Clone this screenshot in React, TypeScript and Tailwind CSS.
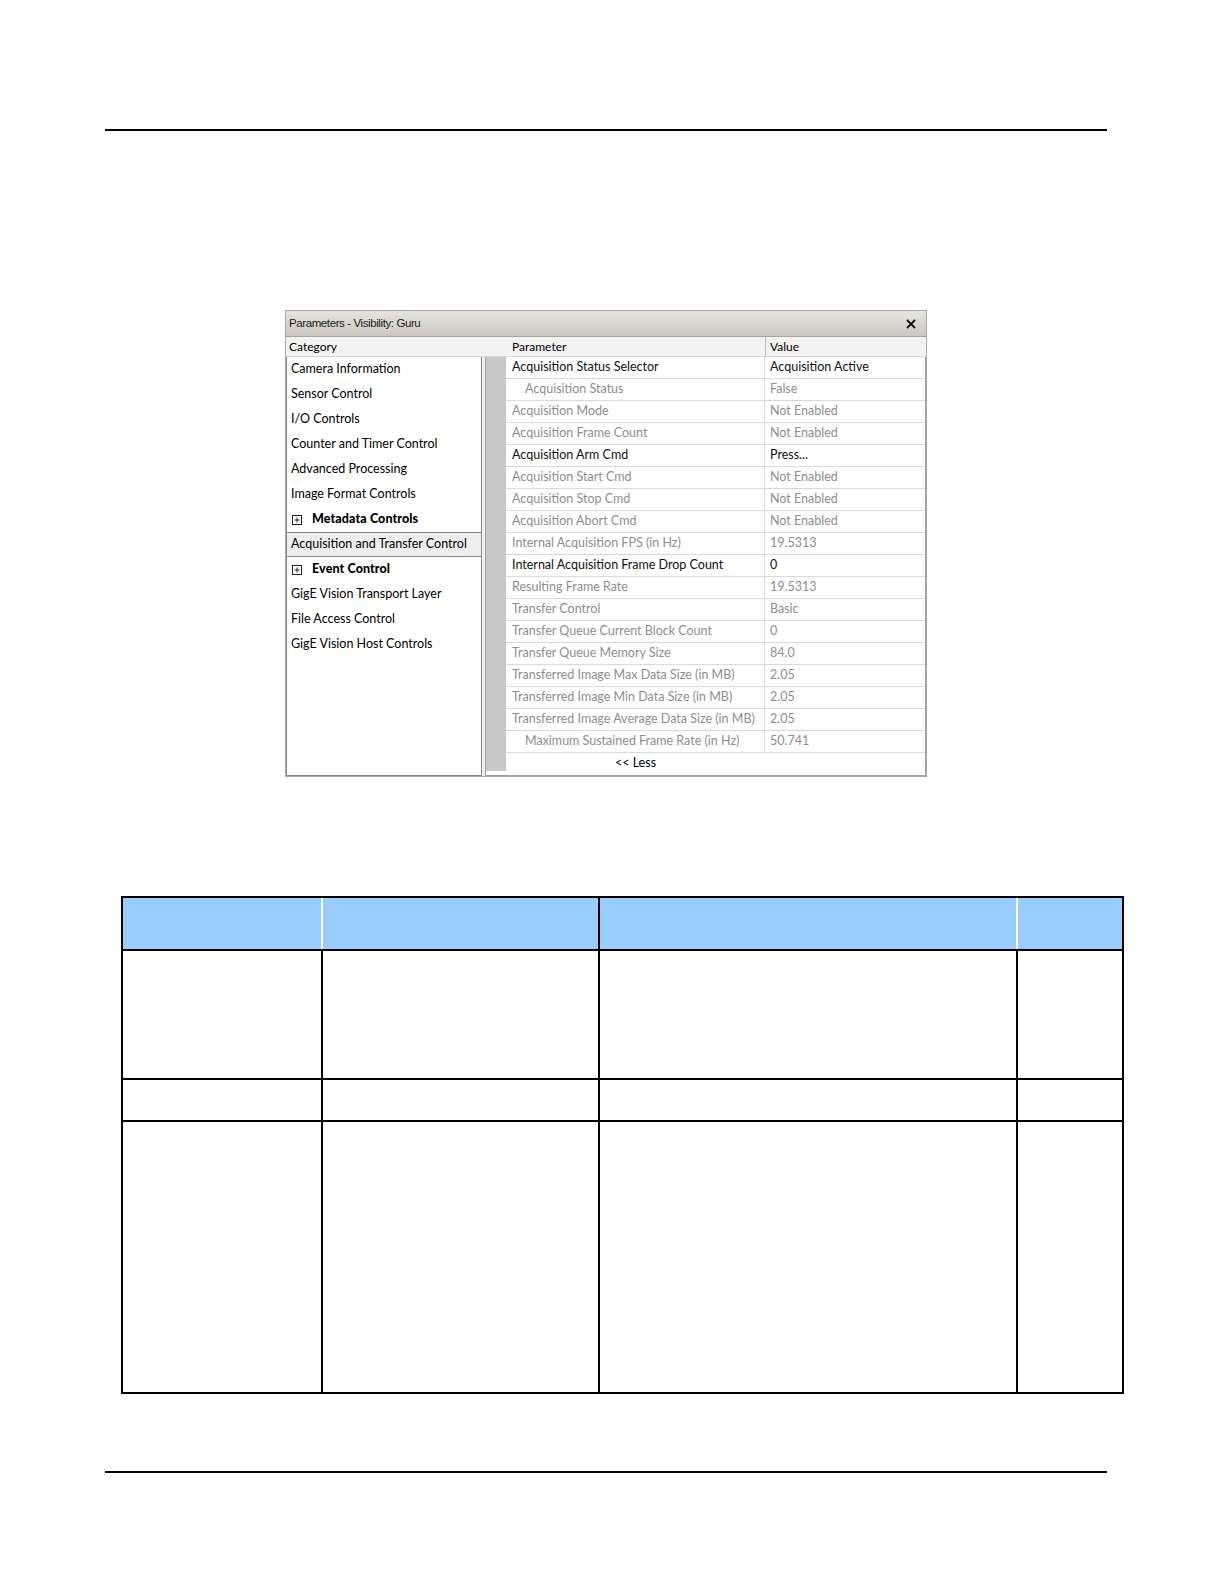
import React from "react";

const categories: { label: string; bold?: boolean; selected?: boolean }[] = [
  { label: "Camera Information" },
  { label: "Sensor Control" },
  { label: "I/O Controls" },
  { label: "Counter and Timer Control" },
  { label: "Advanced Processing" },
  { label: "Image Format Controls" },
  { label: "Metadata Controls", bold: true },
  { label: "Acquisition and Transfer Control", selected: true },
  { label: "Event Control", bold: true },
  { label: "GigE Vision Transport Layer" },
  { label: "File Access Control" },
  { label: "GigE Vision Host Controls" },
];

const params: { name: string; value: string; active?: boolean; indent?: boolean }[] = [
  { name: "Acquisition Status Selector", value: "Acquisition Active", active: true },
  { name: "Acquisition Status", value: "False", indent: true },
  { name: "Acquisition Mode", value: "Not Enabled" },
  { name: "Acquisition Frame Count", value: "Not Enabled" },
  { name: "Acquisition Arm Cmd", value: "Press...", active: true },
  { name: "Acquisition Start Cmd", value: "Not Enabled" },
  { name: "Acquisition Stop Cmd", value: "Not Enabled" },
  { name: "Acquisition Abort Cmd", value: "Not Enabled" },
  { name: "Internal Acquisition FPS (in Hz)", value: "19.5313" },
  { name: "Internal Acquisition Frame Drop Count", value: "0", active: true },
  { name: "Resulting Frame Rate", value: "19.5313" },
  { name: "Transfer Control", value: "Basic" },
  { name: "Transfer Queue Current Block Count", value: "0" },
  { name: "Transfer Queue Memory Size", value: "84.0" },
  { name: "Transferred Image Max Data Size (in MB)", value: "2.05" },
  { name: "Transferred Image Min Data Size (in MB)", value: "2.05" },
  { name: "Transferred Image Average Data Size (in MB)", value: "2.05" },
  { name: "Maximum Sustained Frame Rate (in Hz)", value: "50.741", indent: true },
];

function PlusBox() {
  return (
    <svg width="10" height="10" viewBox="0 0 10 10" className="shrink-0">
      <rect x="0.5" y="0.5" width="9" height="9" fill="white" stroke="#222" strokeWidth="1" />
      <line x1="2.5" y1="5" x2="7.5" y2="5" stroke="#222" strokeWidth="1" />
      <line x1="5" y1="2.5" x2="5" y2="7.5" stroke="#222" strokeWidth="1" />
    </svg>
  );
}

function ParamWindow() {
  return (
    <div
      className="ml-[285px] mt-[179px] flex h-[467px] w-[642px] flex-col border border-[#a8a8a8] bg-[#f0f0f0] text-[12.5px] leading-none text-black"
      style={{ fontFamily: "Lato, 'Noto Sans', sans-serif" }}
    >
      {/* title bar */}
      <div
        className="flex h-[26px] shrink-0 items-center justify-between border-b border-[#a9a69e] bg-gradient-to-b from-[#e6e4de] to-[#cbc7be] pl-[3px] pr-[10px] text-[11.5px] tracking-[-0.4px] text-[#1a1a1a]"
        style={{ fontFamily: "'Liberation Sans', Arial, sans-serif" }}
      >
        <span>Parameters - Visibility: Guru</span>
        <svg width="10" height="10" viewBox="0 0 10 10">
          <line x1="1" y1="1" x2="9" y2="9" stroke="#111" strokeWidth="1.8" />
          <line x1="9" y1="1" x2="1" y2="9" stroke="#111" strokeWidth="1.8" />
        </svg>
      </div>
      {/* header */}
      <div className="flex h-[20px] shrink-0 items-center border-b border-[#d6d6d6] bg-[#f3f3f3]">
        <div className="w-[200px] pl-[3px] text-[12px]">Category</div>
        <div className="w-[279px] pl-[26px] text-[12px]">Parameter</div>
        <div className="flex h-full items-center border-l border-[#bcbcbc] pl-[4px] text-[12px]">Value</div>
      </div>
      {/* body */}
      <div className="flex min-h-0 flex-1 bg-[#f0f0f0]">
        <div className="flex w-[196px] shrink-0 flex-col border border-[#8a8a8a] border-t-0 bg-white">
          {categories.map((c) =>
            c.selected ? (
              <div
                key={c.label}
                className="-mx-px flex h-[25px] items-center border border-[#8a8a8a] bg-[#ededed] pl-[4px]"
              >
                {c.label}
              </div>
            ) : (
              <div key={c.label} className="flex h-[25px] items-center gap-[10px] pl-[4px]">
                {c.bold ? (
                  <>
                    <span className="ml-[1px]">
                      <PlusBox />
                    </span>
                    <span className="font-black tracking-[0.1px]">{c.label}</span>
                  </>
                ) : (
                  <span>{c.label}</span>
                )}
              </div>
            )
          )}
        </div>
        <div className="ml-[3px] flex flex-1 border border-[#a0a0a0] border-t-0 bg-white">
          <div className="mb-[4px] w-[20px] shrink-0 bg-[#c8c8c8]" />
          <div className="flex flex-1 flex-col">
            {params.map((p) => (
              <div key={p.name} className="flex h-[22px] border-b border-[#dadada]">
                <div
                  className={`flex w-[259px] items-center border-r border-[#dadada] ${p.indent ? "pl-[19px]" : "pl-[6px]"} ${p.active ? "text-[#111]" : "text-[#8e8e8e]"}`}
                >
                  {p.name}
                </div>
                <div className={`flex flex-1 items-center pl-[5px] ${p.active ? "text-[#111]" : "text-[#8e8e8e]"}`}>
                  {p.value}
                </div>
              </div>
            ))}
            <div className="flex h-[20px] items-center">
              <div className="w-[259px] text-center">&lt;&lt; Less</div>
            </div>
          </div>
        </div>
      </div>
    </div>
  );
}

function Row({ h, last }: { h?: string; last?: boolean }) {
  return (
    <div className={`flex ${h ?? "flex-1"} shrink-0 ${last ? "" : "border-b-2 border-black"}`}>
      <div className="w-[200px] border-r-2 border-black" />
      <div className="w-[277px] border-r-2 border-black" />
      <div className="w-[418px] border-r-2 border-black" />
      <div className="flex-1" />
    </div>
  );
}

function DocTable() {
  return (
    <div className="ml-[121px] mt-[119px] flex h-[498px] w-[1003px] shrink-0 flex-col border-2 border-black">
      <div className="flex h-[53px] shrink-0 border-b-2 border-black bg-[#99ccff]">
        <div className="w-[200px] border-r-2 border-white" />
        <div className="w-[277px] border-r-2 border-black" />
        <div className="w-[418px] border-r-2 border-white" />
        <div className="flex-1" />
      </div>
      <Row h="h-[129px]" />
      <Row h="h-[42px]" />
      <Row last />
    </div>
  );
}

export default function App() {
  return (
    <div className="flex w-full flex-col bg-white pb-[100px]">
      <div className="ml-[105px] mt-[129px] h-[2px] w-[1002px] shrink-0 bg-black" />
      <ParamWindow />
      <DocTable />
      <div className="ml-[105px] mt-[77px] h-[2px] w-[1002px] shrink-0 bg-black" />
    </div>
  );
}
